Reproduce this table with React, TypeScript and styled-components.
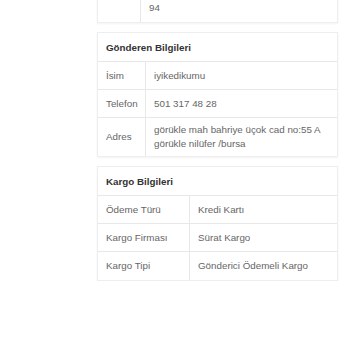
import styled, { createGlobalStyle } from 'styled-components';

const GlobalStyle = createGlobalStyle`
  html, body {
    margin: 0;
    padding: 0;
    background: #fff;
  }
  body {
    font-family: "Liberation Sans", Arial, sans-serif;
    font-size: 9.8px;
    color: #666;
    overflow: hidden;
  }
`;

const Page = styled.div`
  width: 241px;
  margin-left: 97px;
  display: flex;
  flex-direction: column;
  gap: 9px;
`;

const Panel = styled.section<{ $offset?: number }>`
  background: #fff;
  border: 1px solid #eeeeee;
  box-shadow: 0 1px 2px rgba(0, 0, 0, 0.05);
  margin-top: ${(p) => (p.$offset ? `-${p.$offset}px` : '0')};
`;

const PanelTitle = styled.h3`
  margin: 0;
  height: 28px;
  padding-left: 8px;
  display: flex;
  align-items: center;
  font-size: 9.8px;
  font-weight: bold;
  color: #333;
  border-bottom: 1px solid #e8e8e8;
`;

const InfoTable = styled.div<{ $labelWidth: number }>`
  display: grid;
  grid-template-columns: ${(p) => p.$labelWidth}px 1fr;
  grid-auto-rows: minmax(28px, auto);
`;

const Cell = styled.div<{ $last?: boolean }>`
  padding: 5px 8px;
  line-height: 14px;
  display: flex;
  align-items: center;
  border-bottom: ${(p) => (p.$last ? 'none' : '1px solid #e8e8e8')};
`;

const LabelCell = styled(Cell)`
  border-right: 1px solid #e8e8e8;
`;

const ValueCell = styled(Cell)`
  color: #666;
`;

const WrapValue = styled(ValueCell)`
  flex-direction: column;
  align-items: flex-start;
  padding: 7px 8px;
  white-space: nowrap;
`;

interface Row {
  label: string;
  value: string;
}

const sender: Row[] = [
  { label: 'İsim', value: 'iyikedikumu' },
  { label: 'Telefon', value: '501 317 48 28' },
  { label: 'Adres', value: 'görükle mah bahriye üçok cad no:55 A görükle nilüfer /bursa' },
];

const shipping: Row[] = [
  { label: 'Ödeme Türü', value: 'Kredi Kartı' },
  { label: 'Kargo Firması', value: 'Sürat Kargo' },
  { label: 'Kargo Tipi', value: 'Gönderici Ödemeli Kargo' },
];

const InfoPanel = ({ title, rows, labelWidth }: { title: string; rows: Row[]; labelWidth: number }) => (
  <Panel>
    <PanelTitle>{title}</PanelTitle>
    <InfoTable $labelWidth={labelWidth}>
      {rows.map((row, i) => {
        const last = i === rows.length - 1;
        return [
          <LabelCell key={`l${i}`} $last={last}>{row.label}</LabelCell>,
          <ValueCell key={`v${i}`} $last={last}>{row.value}</ValueCell>,
        ];
      })}
    </InfoTable>
  </Panel>
);

export default function App() {
  return (
    <>
      <GlobalStyle />
      <Page>
        {/* alıcı paneli: sadece son satırın altı görünüyor */}
        <Panel $offset={21}>
          <InfoTable $labelWidth={43}>
            <LabelCell $last />
            <WrapValue $last>
              <span>görükle mah bahriye üçok cad no:55 A 0532</span>
              <span>94</span>
            </WrapValue>
          </InfoTable>
        </Panel>
        <InfoPanel title="Gönderen Bilgileri" rows={sender} labelWidth={48} />
        <InfoPanel title="Kargo Bilgileri" rows={shipping} labelWidth={92} />
      </Page>
    </>
  );
}
